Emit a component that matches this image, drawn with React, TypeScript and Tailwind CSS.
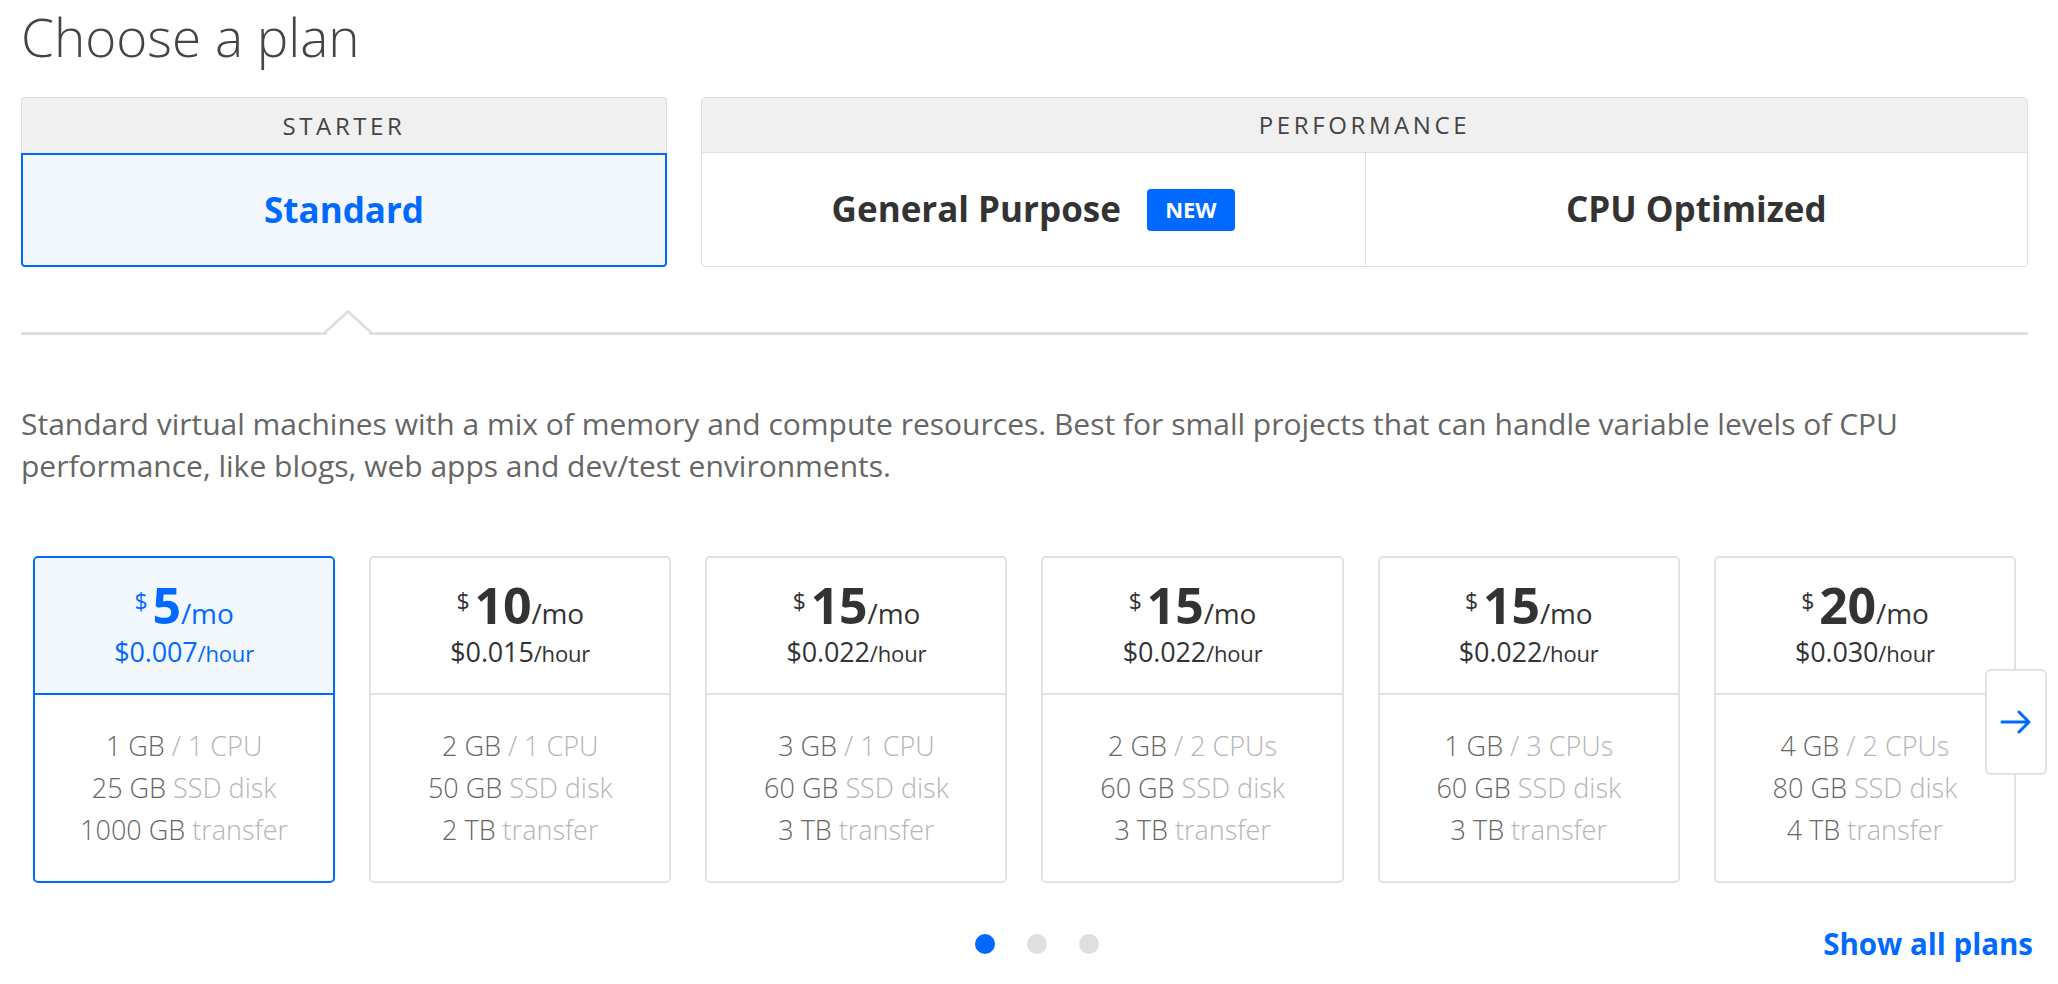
import React from 'react';

type Plan = {
  price: string;
  hour: string;
  ram: string;
  cpu: string;
  disk: string;
  transfer: string;
  selected?: boolean;
};

const plans: Plan[] = [
  { price: '5', hour: '0.007', ram: '1 GB', cpu: '1 CPU', disk: '25 GB', transfer: '1000 GB', selected: true },
  { price: '10', hour: '0.015', ram: '2 GB', cpu: '1 CPU', disk: '50 GB', transfer: '2 TB' },
  { price: '15', hour: '0.022', ram: '3 GB', cpu: '1 CPU', disk: '60 GB', transfer: '3 TB' },
  { price: '15', hour: '0.022', ram: '2 GB', cpu: '2 CPUs', disk: '60 GB', transfer: '3 TB' },
  { price: '15', hour: '0.022', ram: '1 GB', cpu: '3 CPUs', disk: '60 GB', transfer: '3 TB' },
  { price: '20', hour: '0.030', ram: '4 GB', cpu: '2 CPUs', disk: '80 GB', transfer: '4 TB' },
];

const PlanCard: React.FC<{ plan: Plan }> = ({ plan }) => {
  const sel = plan.selected;
  return (
    <div
      className={`h-[327px] rounded-[5px] border-2 flex flex-col ${
        sel ? 'border-[#0069ff]' : 'border-[#e2e2e2]'
      }`}
    >
      <div
        className={`h-[137px] border-b-2 flex flex-col items-center justify-center rounded-t-[3px] ${
          sel ? 'border-[#0069ff] bg-[#f3f8ff] text-[#0069ff]' : 'border-[#e2e2e2] text-[#333]'
        }`}
      >
        <div className="h-[48px] flex items-baseline tracking-[-0.01em]">
          <span className="text-[23px] leading-[48px] relative top-[-14px] mr-[5px]">$</span>
          <span className="text-[50px] leading-[48px] font-bold">{plan.price}</span>
          <span className="text-[28px] leading-[48px]">/mo</span>
        </div>
        <div className="h-[36px] leading-[36px] tracking-[-0.01em] mt-[5px]">
          <span className="text-[27px]">${plan.hour}</span>
          <span className="text-[22px]">/hour</span>
        </div>
      </div>
      <div className="flex-1 flex flex-col items-center justify-center text-[27px] leading-[42px] text-[#666] font-light">
        <div>
          {plan.ram} <span className="text-[#b5b5b5]">/ {plan.cpu}</span>
        </div>
        <div>
          {plan.disk} <span className="text-[#b5b5b5]">SSD disk</span>
        </div>
        <div>
          {plan.transfer} <span className="text-[#b5b5b5]">transfer</span>
        </div>
      </div>
    </div>
  );
};

const App: React.FC = () => {
  return (
    <div className="min-h-screen bg-white font-[family-name:'Open_Sans',sans-serif] text-[#444]">
      <div className="w-[2007px] ml-[21px] pt-[13px]">
        <h1 className="text-[53px] leading-[48px] text-[#444] font-light">Choose a plan</h1>

        {/* plan type tabs */}
        <div className="mt-[36px] flex gap-[34px] h-[170px]">
          <div className="w-[646px] flex flex-col">
            <div className="h-[56px] rounded-t-[4px] border border-b-0 border-[#dfdfdf] bg-[#f0f0f0] flex items-center justify-center text-[24px] tracking-[0.15em] font-medium text-[#444]">
              STARTER
            </div>
            <div className="flex-1 rounded-b-[4px] border-2 border-[#0069ff] bg-[#f3f8ff] flex items-center justify-center text-[35px] font-bold text-[#0069ff]">
              Standard
            </div>
          </div>
          <div className="flex-1 rounded-[4px] border border-[#dfdfdf] flex flex-col overflow-hidden">
            <div className="h-[55px] bg-[#f0f0f0] border-b border-[#dfdfdf] flex items-center justify-center text-[24px] tracking-[0.15em] font-medium text-[#444]">
              PERFORMANCE
            </div>
            <div className="flex-1 grid grid-cols-2">
              <div className="flex items-center justify-center gap-[26px]">
                <span className="text-[35px] font-bold text-[#333]">General Purpose</span>
                <span className="w-[88px] h-[42px] rounded-[4px] bg-[#0069ff] text-white text-[22px] font-bold flex items-center justify-center">
                  NEW
                </span>
              </div>
              <div className="border-l border-[#dfdfdf] flex items-center justify-center text-[35px] font-bold text-[#333]">
                CPU Optimized
              </div>
            </div>
          </div>
        </div>

        {/* separator with notch */}
        <div className="mt-[65px] relative h-[3px] bg-[#dfdfdf]">
          <svg className="absolute left-[303px] top-[-22px]" width="48" height="25" viewBox="0 0 48 25">
            <rect x="3" y="20" width="42" height="5" fill="#fff" />
            <polyline points="0,23.5 24,1.5 48,23.5" fill="none" stroke="#dfdfdf" strokeWidth="3" />
          </svg>
        </div>

        <p className="mt-[68px] max-w-[1920px] text-[30px] leading-[42px] text-[#666]">
          Standard virtual machines with a mix of memory and compute resources. Best for small projects that can
          handle variable levels of CPU performance, like blogs, web apps and dev/test environments.
        </p>

        {/* plan cards */}
        <div className="mt-[69px] relative px-3 grid grid-cols-6 gap-[34px]">
          {plans.map((p, i) => (
            <PlanCard key={i} plan={p} />
          ))}
          <button className="absolute right-[-19px] top-[113px] w-[62px] h-[106px] bg-white border-2 border-[#e2e2e2] rounded-[6px] flex items-center justify-center">
            <svg width="32" height="24" viewBox="0 0 32 24" fill="none" stroke="#0069ff" strokeWidth="3" strokeLinecap="round" strokeLinejoin="round">
              <path d="M2 12h27M19 2l10 10-10 10" />
            </svg>
          </button>
        </div>

        {/* pager */}
        <div className="mt-[47px] grid grid-cols-[1fr_auto_1fr] items-center h-[28px]">
          <div />
          <div className="flex gap-8 ml-6">
            <span className="w-5 h-5 rounded-full bg-[#0069ff]" />
            <span className="w-5 h-5 rounded-full bg-[#dfdfdf]" />
            <span className="w-5 h-5 rounded-full bg-[#dfdfdf]" />
          </div>
          <a className="justify-self-end mr-[-5px] text-[29.5px] leading-[28px] font-bold text-[#0069ff] cursor-pointer">
            Show all plans
          </a>
        </div>
      </div>
    </div>
  );
};

export default App;
